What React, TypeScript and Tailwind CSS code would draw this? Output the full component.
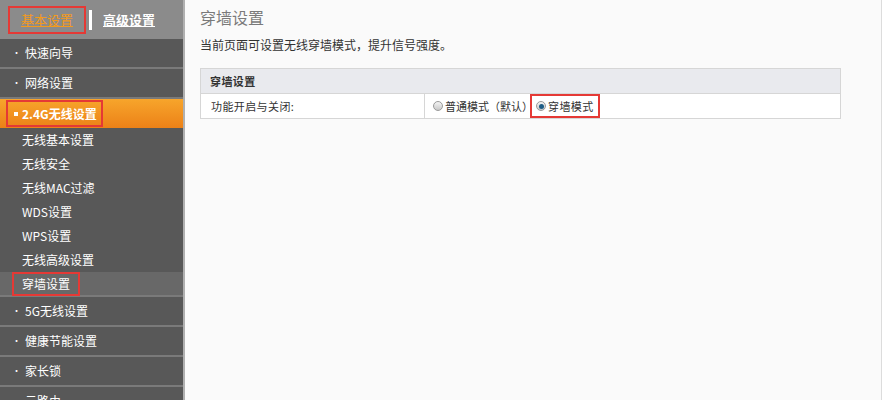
const font = { fontFamily: '"Noto Sans CJK SC", "Noto Sans", sans-serif' };

function Radio({ checked }: { checked?: boolean }) {
  return (
    <span className="inline-flex h-[10px] w-[10px] items-center justify-center rounded-full border border-[#9a9a9a] bg-gradient-to-b from-[#f4f4f4] to-[#c9c9c9]">
      {checked && <span className="h-[5px] w-[5px] rounded-full bg-[#1f5d86]" />}
    </span>
  );
}

export default function App() {
  const topMenu = ['快速向导', '网络设置'];
  const subMenu = ['无线基本设置', '无线安全', '无线MAC过滤', 'WDS设置', 'WPS设置', '无线高级设置'];
  const bottomMenu = ['5G无线设置', '健康节能设置', '家长锁', '云路由'];

  return (
    <div className="flex h-[400px] w-[886px] overflow-hidden bg-white text-[12px]" style={font}>
      <div className="flex w-[185px] shrink-0 flex-col border-r-2 border-[#b0b0b0] bg-[#585858] text-white">
        <div className="flex h-[39px] shrink-0 items-center bg-[#8b8b8b] pl-[8px]">
          <div className="flex h-[28px] w-[78px] items-center justify-center border-2 border-[#e53935]">
            <span className="text-[13px] text-[#f39a1c] underline">基本设置</span>
          </div>
          <span className="ml-[3px] h-[20px] w-[3px] bg-white" />
          <span className="ml-[11px] text-[13px] font-bold underline">高级设置</span>
        </div>

        {topMenu.map((item) => (
          <div key={item} className="flex h-[30px] shrink-0 items-center border-b-2 border-[#7a7a7a] pl-[12px]">
            <span className="mr-[4px] text-[9px]">•</span>
            <span>{item}</span>
          </div>
        ))}

        <div className="flex h-[29px] shrink-0 items-center bg-gradient-to-b from-[#f7a52b] to-[#ec8117] pl-[6px]">
          <div className="flex h-[27px] items-center border-2 border-[#e53935] pr-[4px] pl-[6px]">
            <span className="mr-[4px] h-[4px] w-[4px] bg-white" />
            <span className="text-[12px] font-bold">2.4G无线设置</span>
          </div>
        </div>

        {subMenu.map((item) => (
          <div key={item} className="flex h-[24px] shrink-0 items-center pl-[22px]">
            {item}
          </div>
        ))}

        <div className="flex h-[25px] shrink-0 items-center border-b-2 border-[#7a7a7a] bg-[#686868] pl-[12px]">
          <div className="flex h-[24px] items-center border-2 border-[#e53935] pr-[8px] pl-[8px]">穿墙设置</div>
        </div>

        {bottomMenu.map((item) => (
          <div key={item} className="flex h-[30px] shrink-0 items-center border-b-2 border-[#7a7a7a] pl-[12px]">
            <span className="mr-[4px] text-[9px]">•</span>
            <span>{item}</span>
          </div>
        ))}
      </div>

      <div className="w-[697px] shrink-0 border-r border-[#dcdcdc] bg-[#fafafa] pt-[5px] pl-[15px]">
        <div className="text-[16px] leading-[24px] text-[#7a7a7a]">穿墙设置</div>
        <div className="mt-[9px] leading-[14px] text-[#333]">当前页面可设置无线穿墙模式，提升信号强度。</div>

        <div className="mt-[16px] w-[641px] border border-[#d6d6d6] bg-white text-[11px] tracking-[0.4px] text-[#333]">
          <div className="flex h-[25px] items-center border-b border-[#d6d6d6] bg-[#e9eaee] pl-[9px] font-bold">
            穿墙设置
          </div>
          <div className="flex h-[24px] items-center">
            <div className="flex h-full w-[224px] items-center border-r border-[#d6d6d6] pl-[10px]">功能开启与关闭:</div>
            <div className="flex items-center pl-[8px]">
              <Radio />
              <span className="ml-[2px] tracking-[0px]">普通模式（默认）</span>
              <div className="-ml-[3px] flex h-[24px] items-center border-2 border-[#e53935] pr-[4px] pl-[4px]">
                <Radio checked />
                <span className="ml-[2px]">穿墙模式</span>
              </div>
            </div>
          </div>
        </div>
      </div>
    </div>
  );
}
